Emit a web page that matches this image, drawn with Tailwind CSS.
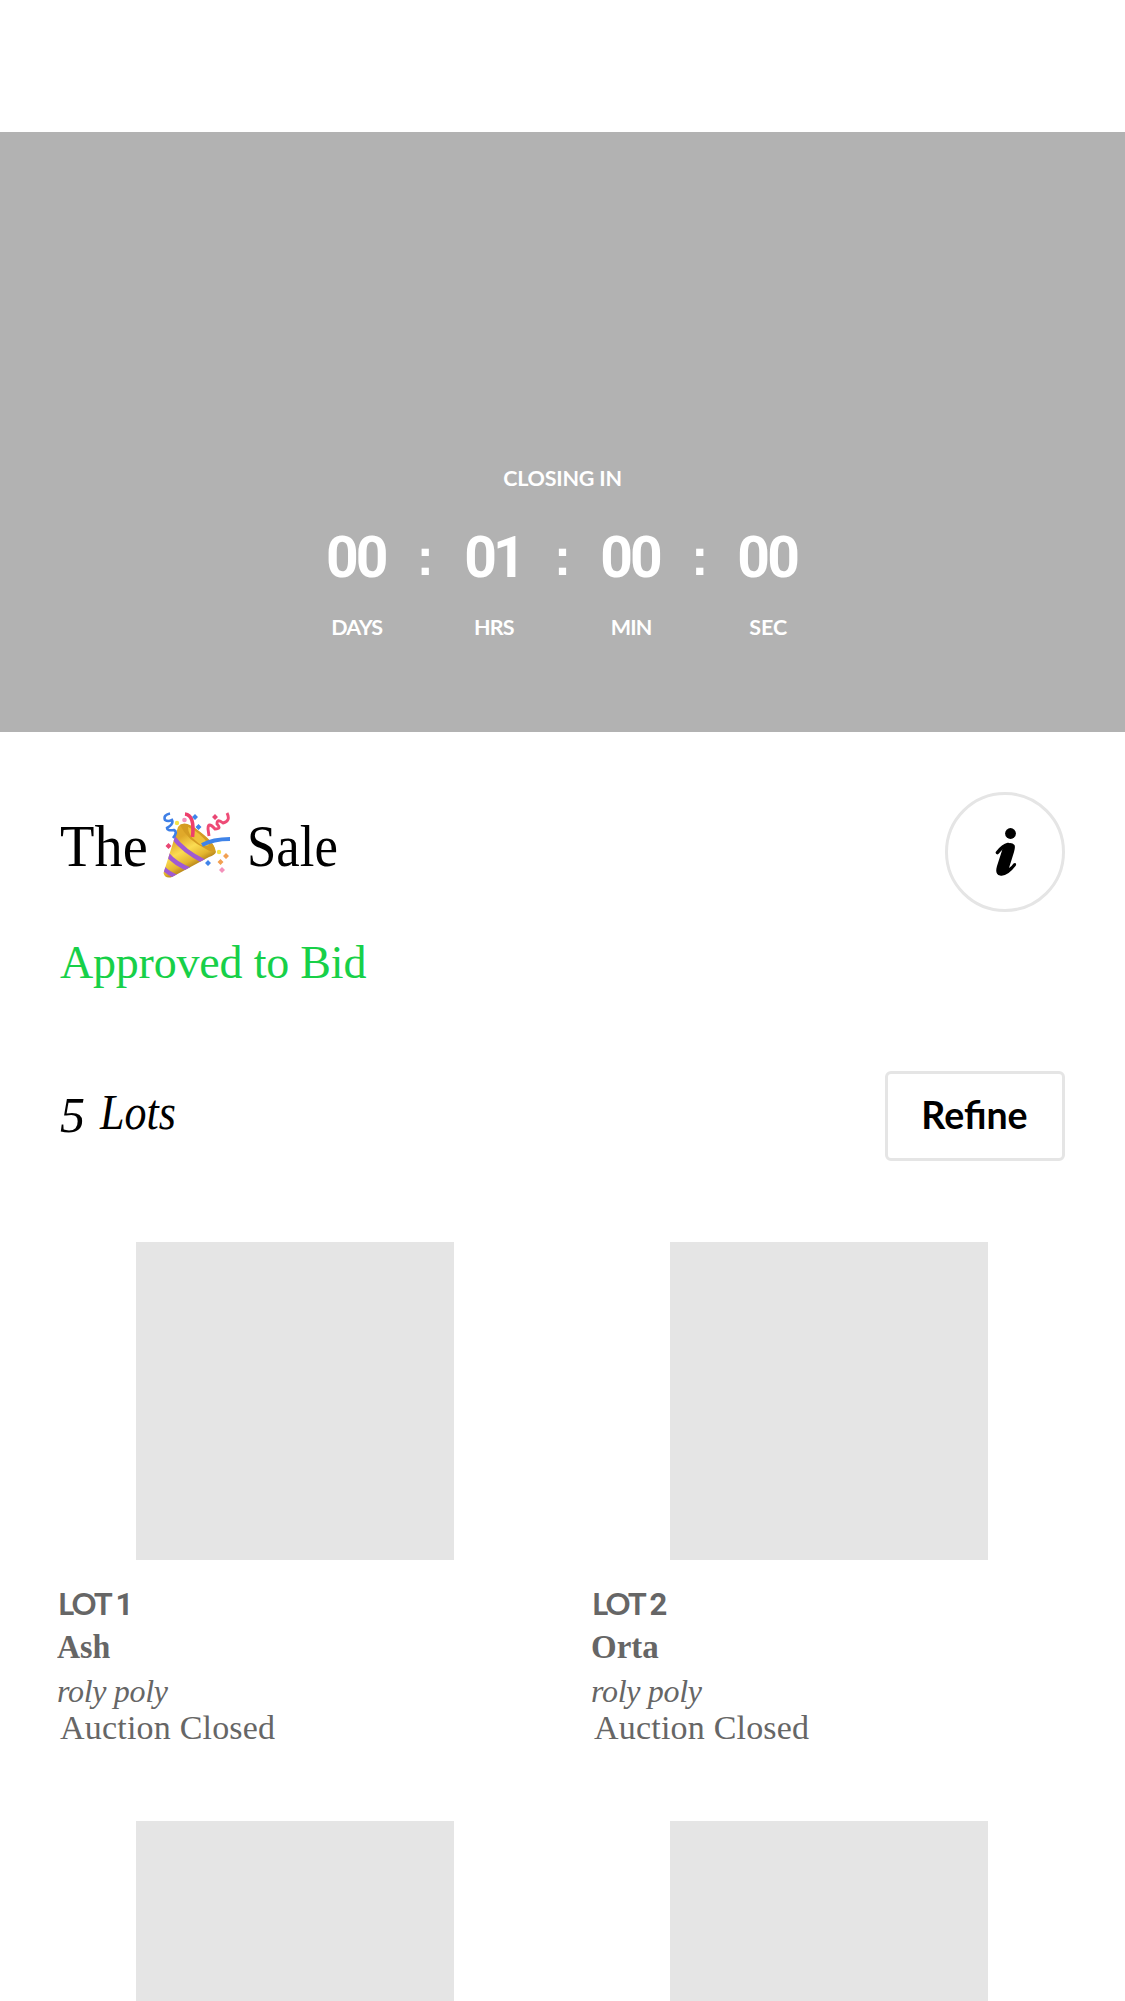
<!DOCTYPE html>
<html lang="en">
<head>
<meta charset="utf-8">
<title>The Sale</title>
<script src="https://cdn.jsdelivr.net/npm/@tailwindcss/browser@4"></script>
</head>
<body class="h-[2001px] w-[1125px] overflow-hidden bg-white font-['Liberation_Serif',serif] text-black">
<section class="mt-[132px] flex h-[600px] flex-col items-center bg-[#b2b2b2] pt-[333px] font-['Lato',sans-serif] text-[21.5px] leading-[26px] font-bold text-white">
  <div class="tracking-[-0.2px]">CLOSING IN</div>
  <div class="mt-[35px] grid w-[480px] grid-cols-7 text-center font-['Roboto',sans-serif] text-[57px] leading-[64px] tracking-[-2.8px]">
    <span class="-ml-[2px]">00</span><span class="font-['Liberation_Sans',sans-serif] text-[51px] tracking-normal">:</span>
    <span class="-ml-[2px] tracking-[-4px]">01</span><span class="font-['Liberation_Sans',sans-serif] text-[51px] tracking-normal">:</span>
    <span class="-ml-[2px]">00</span><span class="font-['Liberation_Sans',sans-serif] text-[51px] tracking-normal">:</span>
    <span class="-ml-[2px]">00</span>
  </div>
  <div class="mt-6 grid w-[480px] grid-cols-7 text-center tracking-[-0.8px]">
    <span>DAYS</span><span></span><span>HRS</span><span></span><span>MIN</span><span></span><span class="tracking-normal">SEC</span>
  </div>
</section>

<header class="flex justify-between px-[60px] pt-[60px]">
  <div>
    <h1 class="flex h-[68px] items-center pt-[40px] text-[60px] leading-[68px]">
      <span class="w-[103px] origin-left scale-x-[0.94]">The</span>
      <svg class="-mt-px h-[67px] w-[67px]" viewBox="0 0 67 67" fill="none">
        <defs>
          <linearGradient id="cone" x1="12" y1="28" x2="28" y2="58" gradientUnits="userSpaceOnUse">
            <stop stop-color="#e0a92a"/><stop offset=".4" stop-color="#fbdc52"/><stop offset=".75" stop-color="#e3b42f"/><stop offset="1" stop-color="#a87512"/>
          </linearGradient>
          <clipPath id="coneClip"><path d="M15 15Q19 8 33 18Q51 29 53 40Q52 43 46 45L9 65Q2 67 .5 61Z"/></clipPath>
        </defs>
        <path d="M15 15Q19 8 33 18Q51 29 53 40Q52 43 46 45L9 65Q2 67 .5 61Z" fill="url(#cone)"/>
        <g clip-path="url(#coneClip)" stroke="#a05ad2" stroke-width="4.500">
          <path d="M10 25Q20 39 42 50"/><path d="M4 42Q12 52 28 58"/><path d="M0 56Q5 61 14 65"/>
        </g>
        <path d="M17 13Q23 8 36 19Q52 31 52 38Q51 42 43 37Q24 28 17 13Z" fill="#d49c22"/>
        <path d="M25 15Q37 20 46 33Q40 36 33 29Q25 23 25 15Z" fill="#efc23a"/>
        <path d="M22 2Q32 3 29.500 25" stroke="#ee3f6c" stroke-width="3.600"/>
        <path d="M39 33Q50 27 67 27" stroke="#3f83e8" stroke-width="4"/>
        <path d="M7 1.500Q0 3 2 8Q5 10 9 8Q11 12 4 16Q4 19 11 18Q15 20 10 26" stroke="#3e7fe6" stroke-width="2.600"/>
        <path d="M64 1Q68 9 60 11Q54 6 54 12Q59 17 52 17Q45 9 45 17L46 24" stroke="#ee4b76" stroke-width="2.900"/>
        <g fill="#4084ea"><path d="m32 2 3 3-3 3-3-3zM35.500 12l3 3-3 3-3-3zM45 48l3 3-3 3-3-3z"/></g>
        <g fill="#e94674"><path d="m52 2 3 3-3 3-3-3zM5.500 31l3 3-3 3-3-3z"/></g>
        <g fill="#f391bb"><circle cx="21.500" cy="8" r="2.300"/><path d="m59 55 3 3-3 3-3-3z"/></g>
        <g fill="#f6e449"><circle cx="14" cy="11" r="2.200"/><circle cx="56" cy="40" r="2.200"/></g>
        <g fill="#f2a052"><path d="m63 41 3 3-3 3-3-3zM57.500 47l3 3-3 3-3-3z"/></g>
      </svg>
      <span class="ml-[17px] origin-left scale-x-[0.88]">Sale</span>
    </h1>
    <p class="mt-[77px] text-[46px] leading-[52px] tracking-[-0.2px] whitespace-nowrap text-[#17d048]">Approved to Bid</p>
  </div>
  <button class="flex size-[120px] items-center justify-center rounded-full border-[3px] border-[#e5e5e5] pl-[2px]" aria-label="Information">
    <svg class="h-12 w-[22px]" viewBox="0 0 22 48">
      <circle cx="15.500" cy="5.500" r="5.400"/>
      <path d="M2.500 24.500Q8 17.500 13 16.500" fill="none" stroke="#000" stroke-width="3.600" stroke-linecap="round"/>
      <path d="M9 17Q16 13 19.500 17Q20.500 19 19 24L14 40Q17 38 18.500 35.500C20.500 34 22 36 20.500 38Q12 49 5 47.500C1 47 .5 43 2 38L7.500 21Z"/>
    </svg>
  </button>
</header>

<div class="mt-[82px] flex h-[90px] items-center justify-between px-[60px]">
  <div class="-mt-[9px] flex text-[50px] leading-[56px] italic">
    <span class="relative top-[3px] w-[40px]">5</span><span class="origin-left scale-x-[0.88]">Lots</span>
  </div>
  <button class="flex h-[90px] w-[180px] items-center justify-center rounded-[6px] border-[3px] border-[#e5e5e5] pr-[1px] pb-[3px] font-['Lato',sans-serif] text-[37.5px] leading-10 font-bold">Refine</button>
</div>

<main class="mt-[81px] grid grid-cols-2 gap-x-[54px] gap-y-[81px] pr-[54px] pl-[57px] text-[#666]">
  <article class="h-[498px]">
    <div class="ml-[79.4px] size-[318px] bg-[#e5e5e5]"></div>
    <h2 class="mt-[24px] ml-px font-['Lato',sans-serif] text-[31px] leading-[38px] font-bold tracking-[-1.8px]">LOT <span class="font-['Roboto',sans-serif]">1</span></h2>
    <p class="mt-[3px] origin-left scale-x-[0.94] text-[34px] leading-[40px] font-bold">Ash</p>
    <p class="mt-[4px] text-[32px] leading-[40px] tracking-[-0.3px] italic">roly poly</p>
    <p class="ml-[3px] text-[34px] leading-[34px] tracking-[0.2px]">Auction Closed</p>
  </article>
  <article class="h-[498px]">
    <div class="ml-[79.4px] size-[318px] bg-[#e5e5e5]"></div>
    <h2 class="mt-[24px] ml-px font-['Lato',sans-serif] text-[31px] leading-[38px] font-bold tracking-[-1.8px]">LOT <span class="font-['Roboto',sans-serif]">2</span></h2>
    <p class="mt-[3px] origin-left scale-x-[0.97] text-[34px] leading-[40px] font-bold">Orta</p>
    <p class="mt-[4px] text-[32px] leading-[40px] tracking-[-0.3px] italic">roly poly</p>
    <p class="ml-[3px] text-[34px] leading-[34px] tracking-[0.2px]">Auction Closed</p>
  </article>
  <article class="h-[180px] overflow-hidden"><div class="ml-[79.4px] h-[318px] w-[318px] bg-[#e5e5e5]"></div></article>
  <article class="h-[180px] overflow-hidden"><div class="ml-[79.4px] h-[318px] w-[318px] bg-[#e5e5e5]"></div></article>
</main>
</body>
</html>
